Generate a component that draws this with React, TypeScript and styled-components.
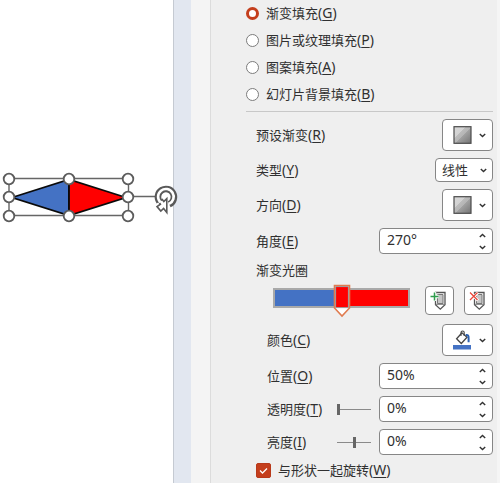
import React, { useState } from "react";
import styled, { createGlobalStyle, css } from "styled-components";

const GlobalStyle = createGlobalStyle`
  * { box-sizing: border-box; }
  body {
    margin: 0;
    background: #ffffff;
    color: #303030;
    font: 13px/20px "Noto Sans", "Noto Sans CJK SC", sans-serif;
  }
  button, input, select { font: inherit; color: inherit; margin: 0; }
`;

const Workspace = styled.div`
  display: flex;
  min-height: 100vh;
`;

const Canvas = styled.main`
  position: relative;
  flex: 1;
  min-width: 0;
  background: #ffffff;
`;

const Drawing = styled.svg`
  position: absolute;
  z-index: 1;
  left: 0;
  top: 170px;
  overflow: visible;
`;

const Backdrop = styled.div`
  width: 18px;
  background: #e2e7f0;
  border-left: 1px solid #c5cad2;
`;

const Gutter = styled.div`
  width: 20px;
  background: #f4f4f4;
  border-right: 1px solid #dcdcdc;
`;

const Panel = styled.aside`
  width: 289px;
  background: #efefef;
  border-right: 3px solid #f5f5f5;
  padding: 0 4px 0 35px;
`;

const FillKinds = styled.div`
  display: grid;
  grid-auto-rows: 26px;
  gap: 1px;
`;

const ChoiceLabel = styled.label`
  display: flex;
  align-items: center;
  gap: 7px;
`;

const Radio = styled.input`
  appearance: none;
  flex: none;
  width: 13px;
  height: 13px;
  border: 1px solid #7c7c7c;
  border-radius: 50%;
  background: #ffffff;
  &:checked { border: 3px solid #c43e1c; }
`;

const Checkbox = styled.input`
  appearance: none;
  flex: none;
  width: 15px;
  height: 15px;
  border: 1px solid #b8391a;
  border-radius: 2px;
  background: #ffffff;
  &:checked {
    background: #c43e1c url("data:image/svg+xml,%3Csvg xmlns='http://www.w3.org/2000/svg' viewBox='0 0 13 13'%3E%3Cpath d='M3 6.5l2.5 2.5L10 4.5' fill='none' stroke='white' stroke-width='1.3'/%3E%3C/svg%3E");
  }
`;

const Key = styled.span`
  font-size: 14px;
  u { text-underline-offset: 2px; text-decoration-thickness: 1px; }
`;

const Divider = styled.hr`
  width: 100%;
  margin: 4px 0 7px;
  border: 0;
  border-top: 1px solid #c8c8c8;
`;

const Fields = styled.div`
  display: grid;
  gap: 7px;
  padding-left: 10px;
`;

const Row = styled.div<{ $nested?: boolean }>`
  display: flex;
  align-items: center;
  padding-left: ${(p) => (p.$nested ? 11 : 0)}px;
`;

const FieldLabel = styled.label`
  flex: 1;
`;

const StopsGroup = styled.div`
  display: grid;
  gap: 7px;
  padding-bottom: 2px;
`;

const Heading = styled.div`
  line-height: 18px;
`;

const frame = css`
  border: 1px solid #868686;
  border-radius: 4px;
  background: #ffffff;
`;

const PickerButton = styled.button`
  ${frame}
  display: flex;
  align-items: center;
  justify-content: space-between;
  width: 51px;
  height: 32px;
  padding: 0 6px 0 10px;
`;

const StopButton = styled.button`
  ${frame}
  display: grid;
  place-items: center;
  width: 29px;
  height: 29px;
  padding: 0;
`;

const SelectBox = styled.select`
  ${frame}
  appearance: none;
  width: 58px;
  height: 24px;
  padding: 0 0 0 6px;
  background: #ffffff url("data:image/svg+xml,%3Csvg xmlns='http://www.w3.org/2000/svg' width='7' height='5'%3E%3Cpath d='M.8 1l2.7 2.6L6.2 1' fill='none' stroke='%23333' stroke-width='1.4'/%3E%3C/svg%3E") no-repeat right 5px center;
`;

const NumberBox = styled.div`
  ${frame}
  display: flex;
  width: 114px;
  height: 26px;
`;

const NumberInput = styled.input`
  flex: 1;
  min-width: 0;
  padding: 0 0 2px 7px;
  border: 0;
  background: transparent;
  font-size: 14px;
`;

const Spinner = styled.div`
  display: grid;
  grid-template-rows: 1fr 1fr;
  width: 19px;
`;

const SpinButton = styled.button`
  display: grid;
  place-items: center;
  padding: 0;
  border: 0;
  background: transparent;
`;

const StopsRow = styled.div`
  display: flex;
  align-items: center;
  gap: 10px;
  padding-left: 17px;
`;

const StopsTrack = styled.div`
  position: relative;
  flex: 1;
  height: 20px;
  margin: 0 5px 5px 0;
  border: 2px solid #a9a9a9;
  background: linear-gradient(90deg, #4472c4 50%, #ff0000 50%);
`;

const StopRange = styled.input`
  position: absolute;
  inset: 0;
  width: 100%;
  opacity: 0;
`;

const StopMarker = styled.svg`
  position: absolute;
  left: 50%;
  top: -6px;
  margin-left: -9px;
  pointer-events: none;
`;

const Slider = styled.input`
  appearance: none;
  width: 34px;
  height: 12px;
  margin-right: 8px;
  background: linear-gradient(#8a8a8a, #8a8a8a) center / 100% 1px no-repeat;
  &::-webkit-slider-thumb {
    appearance: none;
    width: 3px;
    height: 11px;
    background: #666666;
  }
`;

const RotateOption = styled.div`
  padding: 5px 0 1px 10px;
`;

function Caption({ text, mnemonic }: { text: string; mnemonic: string }) {
  return (
    <span>
      {text}
      <Key>(<u>{mnemonic}</u>)</Key>
    </span>
  );
}

function Chevron({ up = false }: { up?: boolean }) {
  return (
    <svg width="7" height="5" viewBox="0 0 7 5" fill="none" stroke="#333" strokeWidth="1.4">
      <path d={up ? "M.8 4l2.7-2.6L6.2 4" : "M.8 1l2.7 2.6L6.2 1"} />
    </svg>
  );
}

function GradientSwatch({ id }: { id: string }) {
  return (
    <svg width="19" height="18" viewBox="0 0 19 18">
      <defs>
        <linearGradient id={id} x1="0" y1="0" x2="1" y2="1">
          <stop offset="0" stopColor="#d9d9d9" />
          <stop offset="0.35" stopColor="#d2d2d2" />
          <stop offset="0.36" stopColor="#bcbcbc" />
          <stop offset="0.52" stopColor="#b5b5b5" />
          <stop offset="0.53" stopColor="#a2a2a2" />
          <stop offset="1" stopColor="#747474" />
        </linearGradient>
      </defs>
      <rect x="1" y="0.7" width="17" height="16.6" fill={`url(#${id})`} stroke="#4b4b4b" strokeWidth="1.2" />
    </svg>
  );
}

function StopIcon({ remove = false }: { remove?: boolean }) {
  return (
    <svg width="20" height="20" viewBox="0 0 20 20" fill="none">
      <path d="M5.5 1.5h9.5v12.3l-4.7 4.4l-4.8-4.4z" fill="#fff" stroke="#555" strokeWidth="1.3" />
      <path d="M7.5 3.5h5.5v9H7.5z" fill="#c6c6c6" stroke="#777" />
      <path d="M5.7 13.3h9.1" stroke="#777" />
      {remove ? (
        <>
          <path d="M1 1.5l8 8M9 1.5l-8 8" stroke="#fff" strokeWidth="3" />
          <path d="M1 1.5l7.5 7.5M8.5 1.5l-7.5 7.5" stroke="#e8473a" strokeWidth="1.3" />
        </>
      ) : (
        <>
          <path d="M4.5 1v9M.5 5.5h8" stroke="#fff" strokeWidth="3.4" />
          <path d="M4.5 1.5v8M.5 5.5h8" stroke="#2f9c4c" strokeWidth="1.5" />
        </>
      )}
    </svg>
  );
}

function BucketIcon() {
  return (
    <svg width="19" height="20" viewBox="0 0 19 20" fill="none">
      <rect x="0" y="15" width="18" height="4.5" fill="#4472c4" />
      <path d="M9 2.8L3.6 8.8l4.7 4.7l5.7-6.2z" fill="#fff" stroke="#444" strokeWidth="1.3" />
      <path d="M8 6V2.6a1.6 1.6 0 0 1 3.2 0v3.4" stroke="#444" strokeWidth="1.1" />
      <path d="M12.8 5c2-.4 3 .6 2.8 3.2v4" stroke="#2b5fae" strokeWidth="2" />
    </svg>
  );
}

function SelectedShape() {
  const handles = [
    [9, 9], [69, 9], [128, 9],
    [9, 27], [128, 27],
    [9, 46], [69, 46], [128, 46],
  ];
  return (
    <Drawing width="180" height="56" viewBox="0 0 180 56" fill="none">
      <path d="M12 27.5L69 9.5v36z" fill="#4472c4" stroke="#0a0a0a" strokeWidth="1.8" />
      <path d="M126 27.5L69 9.5v36z" fill="#ff0000" stroke="#0a0a0a" strokeWidth="1.8" />
      <path d="M9 8.5h119.5v37H9zM134 26.5h22" stroke="#666" strokeWidth="1.4" />
      {handles.map(([x, y]) => (
        <circle key={`${x}-${y}`} cx={x} cy={y} r="5.3" fill="#fff" stroke="#5c5c5c" strokeWidth="1.8" />
      ))}
      <g>
        <path d="M169.2 34.3A8 8 0 1 0 159.4 31.6" stroke="#595959" strokeWidth="6.6" />
        <path d="M157 36.6L160.4 34.2L158.6 31.4L162.4 29.6L163.8 31.6L166.8 28.6V42.4L163.6 38.4L160.8 41z" fill="#fff" stroke="#595959" strokeWidth="1.6" />
        <path d="M169 33.9A7.8 7.8 0 1 0 160.5 32.4" stroke="#fff" strokeWidth="2.6" />
      </g>
    </Drawing>
  );
}

function NumberField({ id, initial, unit }: { id: string; initial: number; unit: string }) {
  const [text, setText] = useState(`${initial}${unit}`);
  const step = (delta: number) => setText(`${(parseInt(text, 10) || 0) + delta}${unit}`);
  return (
    <NumberBox>
      <NumberInput id={id} type="text" value={text} onChange={(e) => setText(e.target.value)} />
      <Spinner>
        <SpinButton type="button" aria-label="增加" onClick={() => step(1)}><Chevron up /></SpinButton>
        <SpinButton type="button" aria-label="减少" onClick={() => step(-1)}><Chevron /></SpinButton>
      </Spinner>
    </NumberBox>
  );
}

const fillKinds = [
  ["渐变填充", "G"],
  ["图片或纹理填充", "P"],
  ["图案填充", "A"],
  ["幻灯片背景填充", "B"],
];

export default function App() {
  return (
    <>
      <GlobalStyle />
      <Workspace>
        <Canvas><SelectedShape /></Canvas>
        <Backdrop />
        <Gutter />
        <Panel>
          <FillKinds>
            {fillKinds.map(([text, key], i) => (
              <ChoiceLabel key={key}>
                <Radio type="radio" name="fill" defaultChecked={i === 0} />
                <Caption text={text} mnemonic={key} />
              </ChoiceLabel>
            ))}
          </FillKinds>
          <Divider />
          <Fields>
            <Row>
              <FieldLabel htmlFor="preset"><Caption text="预设渐变" mnemonic="R" /></FieldLabel>
              <PickerButton id="preset" type="button"><GradientSwatch id="swatch-preset" /><Chevron /></PickerButton>
            </Row>
            <Row>
              <FieldLabel htmlFor="kind"><Caption text="类型" mnemonic="Y" /></FieldLabel>
              <SelectBox id="kind"><option>线性</option></SelectBox>
            </Row>
            <Row>
              <FieldLabel htmlFor="direction"><Caption text="方向" mnemonic="D" /></FieldLabel>
              <PickerButton id="direction" type="button"><GradientSwatch id="swatch-direction" /><Chevron /></PickerButton>
            </Row>
            <Row>
              <FieldLabel htmlFor="angle"><Caption text="角度" mnemonic="E" /></FieldLabel>
              <NumberField id="angle" initial={270} unit="°" />
            </Row>
            <StopsGroup>
              <Heading>渐变光圈</Heading>
              <StopsRow>
                <StopsTrack>
                  <StopRange type="range" aria-label="渐变光圈" defaultValue={50} />
                  <StopMarker width="18" height="34" viewBox="0 0 18 34">
                    <path d="M1.5 1.5h15v22.5L9 32l-7.5-8z" fill="#fff" stroke="#e07b4f" strokeWidth="1.6" />
                    <path d="M2.6 2.6h12.8v21H2.6z" fill="#ff0000" stroke="#9b9b9b" />
                  </StopMarker>
                </StopsTrack>
                <StopButton type="button" aria-label="添加渐变光圈"><StopIcon /></StopButton>
                <StopButton type="button" aria-label="删除渐变光圈"><StopIcon remove /></StopButton>
              </StopsRow>
            </StopsGroup>
            <Row $nested>
              <FieldLabel htmlFor="color"><Caption text="颜色" mnemonic="C" /></FieldLabel>
              <PickerButton id="color" type="button"><BucketIcon /><Chevron /></PickerButton>
            </Row>
            <Row $nested>
              <FieldLabel htmlFor="position"><Caption text="位置" mnemonic="O" /></FieldLabel>
              <NumberField id="position" initial={50} unit="%" />
            </Row>
            <Row $nested>
              <FieldLabel htmlFor="transparency"><Caption text="透明度" mnemonic="T" /></FieldLabel>
              <Slider type="range" aria-label="透明度" defaultValue={0} />
              <NumberField id="transparency" initial={0} unit="%" />
            </Row>
            <Row $nested>
              <FieldLabel htmlFor="brightness"><Caption text="亮度" mnemonic="I" /></FieldLabel>
              <Slider type="range" aria-label="亮度" defaultValue={50} />
              <NumberField id="brightness" initial={0} unit="%" />
            </Row>
          </Fields>
          <RotateOption>
            <ChoiceLabel>
              <Checkbox type="checkbox" defaultChecked />
              <Caption text="与形状一起旋转" mnemonic="W" />
            </ChoiceLabel>
          </RotateOption>
        </Panel>
      </Workspace>
    </>
  );
}
